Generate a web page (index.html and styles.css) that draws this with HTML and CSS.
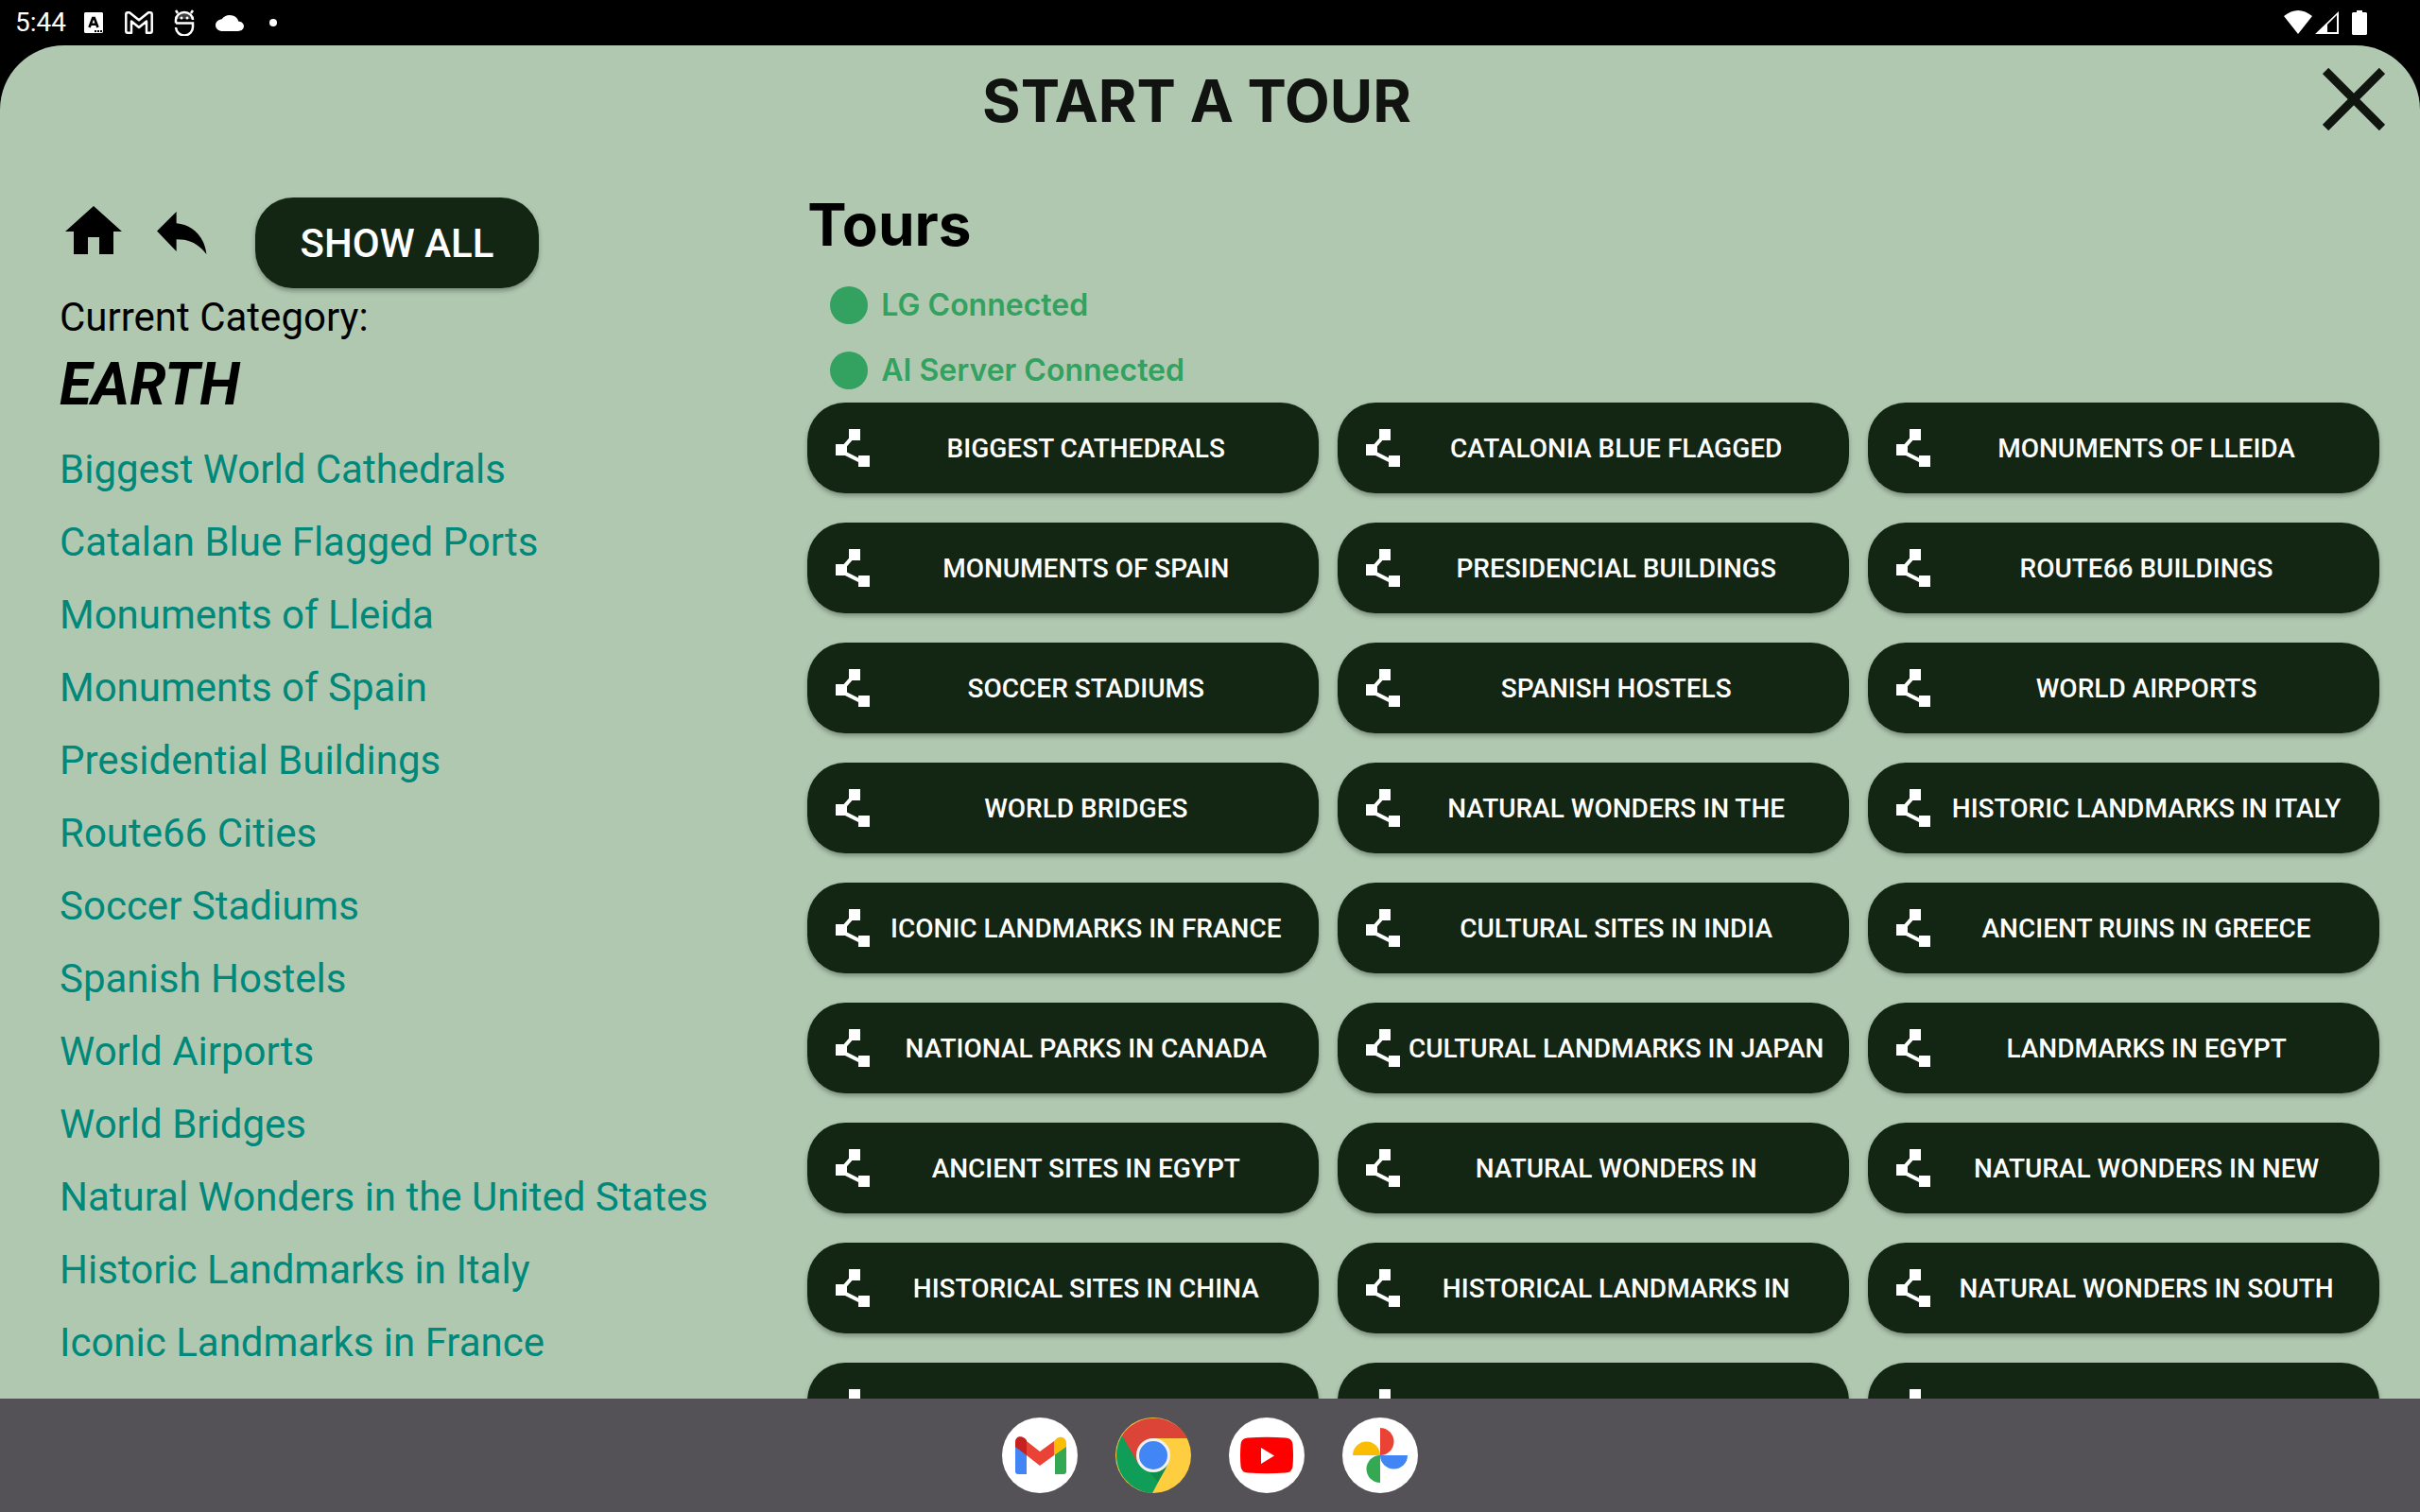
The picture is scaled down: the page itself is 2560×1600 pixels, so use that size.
FILE: index.html
```html
<!DOCTYPE html>
<html lang="en">
<head>
<meta charset="utf-8">
<title>Start a Tour</title>
<link rel="stylesheet" href="styles.css">
</head>
<body>
<svg class="defs" aria-hidden="true">
  <symbol id="tour" viewBox="0 0 24 24"><path d="M15 16v1.26l-6-3v-3.17L11.7 8H16V2h-6v4.9L7.3 10H3v6h5l7 3.5V22h6v-6z"/></symbol>
</svg>
<div class="statusbar">
  <div class="status-group">
    <span class="clock">5:44</span>
    <svg class="status-icon icon-a" viewBox="0 0 20 22"><path fill="#fff" d="M1 0h18l1 1v20l-1 1H1l-1-1V1z"/><path fill="none" stroke="#000" stroke-width="2.6" d="M5.500 16L9.200 6h1.600L14.500 16M7 12.800h6"/><path d="M11 19h2v2h-2zM14 19h2v2h-2zM17 19h2v2h-2z"/></svg>
    <svg class="status-icon icon-m" viewBox="0 0 30 24"><path fill="none" stroke="#fff" stroke-width="2.500" stroke-linejoin="round" d="M1.300 3Q1.300 1.300 3 1.300h2l10 8 10-8h2q1.700 0 1.700 1.700v18q0 1.700-1.700 1.700h-4V10.500L15 17 7 10.500V22.700H3q-1.700 0-1.700-1.700z"/></svg>
    <svg class="status-icon icon-s" viewBox="0 0 22 28"><path fill="none" stroke="#fff" stroke-width="2.500" d="M2 14.500V11a9 8 0 0 1 18 0M2 14.500h18V18a9 9 0 0 1-18 1M4 4L2 1M18 4l2-3"/><path fill="#fff" d="M3 13V10a8 7 0 0 1 16 0H3z" opacity=".25"/><circle cx="8" cy="9" r="1.500" fill="#fff"/><circle cx="14" cy="9" r="1.500" fill="#fff"/></svg>
    <svg class="status-icon icon-cloud" viewBox="0 4 24 16" preserveAspectRatio="none"><path fill="#fff" d="M19.350 10.040C18.670 6.590 15.640 4 12 4 9.110 4 6.600 5.640 5.350 8.040 2.340 8.360 0 10.910 0 14c0 3.310 2.690 6 6 6h13c2.760 0 5-2.240 5-5 0-2.640-2.050-4.780-4.650-4.960z"/></svg>
    <span class="status-dot"></span>
  </div>
  <svg class="status-right" viewBox="0 0 88 26"><path fill="#fff" d="M0 6Q15-6 30 6L15 25zM33 25L58 1v24z"/><path d="M46 15l10-10v18H46z"/><path fill="#fff" d="M77 0h6v2h4l1 1v22l-1 1H73l-1-1V3l1-1h4z"/></svg>
</div>
<div class="stage">
  <main class="screen">
    <header class="topbar">
      <h1 class="title">START A TOUR</h1>
      <button class="icon-button close" aria-label="Close"><svg viewBox="0 0 66 66"><path fill="none" stroke="#10150f" stroke-width="9" d="M3 3l60 60M63 3L3 63"/></svg></button>
    </header>
    <div class="columns">
      <section class="categories">
        <div class="tools">
          <button class="icon-button home" aria-label="Home"><svg viewBox="0 0 24 24"><path d="M10 20v-6h4v6h5v-8h3L12 3 2 12h3v8z"/></svg></button>
          <button class="icon-button back" aria-label="Back"><svg viewBox="0 0 54 46"><path d="M0 21L21 0v12.500C37 14 51 25 53.500 46 44 34 35 30 21 30v13z"/></svg></button>
          <button class="pill show-all">SHOW ALL</button>
        </div>
        <p class="current">Current Category:</p>
        <h2 class="category">EARTH</h2>
        <nav class="links">
          <a href="#">Biggest World Cathedrals</a>
          <a href="#">Catalan Blue Flagged Ports</a>
          <a href="#">Monuments of Lleida</a>
          <a href="#">Monuments of Spain</a>
          <a href="#">Presidential Buildings</a>
          <a href="#">Route66 Cities</a>
          <a href="#">Soccer Stadiums</a>
          <a href="#">Spanish Hostels</a>
          <a href="#">World Airports</a>
          <a href="#">World Bridges</a>
          <a href="#">Natural Wonders in the United States</a>
          <a href="#">Historic Landmarks in Italy</a>
          <a href="#">Iconic Landmarks in France</a>
        </nav>
      </section>
      <section class="tours">
        <h2 class="tours-title">Tours</h2>
        <ul class="connections">
          <li>LG Connected</li>
          <li>AI Server Connected</li>
        </ul>
        <div class="tour-grid">
          <button class="pill tour"><svg><use href="#tour"/></svg><span>BIGGEST CATHEDRALS</span></button>
          <button class="pill tour"><svg><use href="#tour"/></svg><span>CATALONIA BLUE FLAGGED</span></button>
          <button class="pill tour"><svg><use href="#tour"/></svg><span>MONUMENTS OF LLEIDA</span></button>
          <button class="pill tour"><svg><use href="#tour"/></svg><span>MONUMENTS OF SPAIN</span></button>
          <button class="pill tour"><svg><use href="#tour"/></svg><span>PRESIDENCIAL BUILDINGS</span></button>
          <button class="pill tour"><svg><use href="#tour"/></svg><span>ROUTE66 BUILDINGS</span></button>
          <button class="pill tour"><svg><use href="#tour"/></svg><span>SOCCER STADIUMS</span></button>
          <button class="pill tour"><svg><use href="#tour"/></svg><span>SPANISH HOSTELS</span></button>
          <button class="pill tour"><svg><use href="#tour"/></svg><span>WORLD AIRPORTS</span></button>
          <button class="pill tour"><svg><use href="#tour"/></svg><span>WORLD BRIDGES</span></button>
          <button class="pill tour"><svg><use href="#tour"/></svg><span>NATURAL WONDERS IN THE</span></button>
          <button class="pill tour"><svg><use href="#tour"/></svg><span>HISTORIC LANDMARKS IN ITALY</span></button>
          <button class="pill tour"><svg><use href="#tour"/></svg><span>ICONIC LANDMARKS IN FRANCE</span></button>
          <button class="pill tour"><svg><use href="#tour"/></svg><span>CULTURAL SITES IN INDIA</span></button>
          <button class="pill tour"><svg><use href="#tour"/></svg><span>ANCIENT RUINS IN GREECE</span></button>
          <button class="pill tour"><svg><use href="#tour"/></svg><span>NATIONAL PARKS IN CANADA</span></button>
          <button class="pill tour"><svg><use href="#tour"/></svg><span>CULTURAL LANDMARKS IN JAPAN</span></button>
          <button class="pill tour"><svg><use href="#tour"/></svg><span>LANDMARKS IN EGYPT</span></button>
          <button class="pill tour"><svg><use href="#tour"/></svg><span>ANCIENT SITES IN EGYPT</span></button>
          <button class="pill tour"><svg><use href="#tour"/></svg><span>NATURAL WONDERS IN</span></button>
          <button class="pill tour"><svg><use href="#tour"/></svg><span>NATURAL WONDERS IN NEW</span></button>
          <button class="pill tour"><svg><use href="#tour"/></svg><span>HISTORICAL SITES IN CHINA</span></button>
          <button class="pill tour"><svg><use href="#tour"/></svg><span>HISTORICAL LANDMARKS IN</span></button>
          <button class="pill tour"><svg><use href="#tour"/></svg><span>NATURAL WONDERS IN SOUTH</span></button>
          <button class="pill tour" aria-label="Tour"><svg><use href="#tour"/></svg></button>
          <button class="pill tour" aria-label="Tour"><svg><use href="#tour"/></svg></button>
          <button class="pill tour" aria-label="Tour"><svg><use href="#tour"/></svg></button>
        </div>
      </section>
    </div>
  </main>
</div>
<footer class="dock">
  <button class="app" aria-label="Gmail"><svg viewBox="0 0 80 80"><circle cx="40" cy="40" r="40" fill="#fff"/><path fill="#4285f4" d="M14 30l12 9v21h-9q-3 0-3-3z"/><path fill="#34a853" d="M56 39l12-9v27q0 3-3 3h-9z"/><path fill="#ea4335" d="M26 25l14 11 15-11v15L40 51 26 40z"/><path fill="#c5221f" d="M14 31v-5c0-6 6-7 10-4l2 2v16z"/><path fill="#fbbc04" d="M55 40V25l3-3c5-3 10 0 10 5v4z"/></svg></button>
  <button class="app" aria-label="Chrome"><svg viewBox="0 0 80 80"><circle cx="40" cy="40" r="40" fill="#ffcd40"/><path fill="#0f9d58" d="M7 19A40 40 0 0 0 39 80L55 50 40 40z"/><path fill="#db4437" d="M7 19A40 40 0 0 1 76 22H40L24 49z"/><path fill="#0b8043" opacity=".6" d="M36 58l18-5-9 15z"/><circle cx="40" cy="40" r="18" fill="#f1f1f1"/><circle cx="40" cy="40" r="15" fill="#4285f4"/></svg></button>
  <button class="app" aria-label="YouTube"><svg viewBox="0 0 80 80"><circle cx="40" cy="40" r="40" fill="#fff"/><path fill="red" d="M20 21.500q20-1.500 40 0 7 .5 7.500 7 1 11.500 0 23-.5 6.500-7.500 7-20 1.500-40 0-7-.5-7.500-7-1-11.500 0-23 .5-6.500 7.500-7z"/><path fill="#fff" d="M34 32v17l14-8.500z"/></svg></button>
  <button class="app" aria-label="Photos"><svg viewBox="0 0 80 80"><circle cx="40" cy="40" r="40" fill="#fff"/><path fill="#ea4335" d="M40 11a14.500 14.500 0 0 1 0 29z"/><path fill="#4285f4" d="M69 40a14.500 14.500 0 0 1-29 0z"/><path fill="#34a853" d="M40 69a14.500 14.500 0 0 1 0-29z"/><path fill="#fbbc04" d="M11 40a14.500 14.500 0 0 1 29 0z"/></svg></button>
</footer>
</body>
</html>
```
FILE: styles.css
```css
* { box-sizing: border-box; }

body {
  margin: 0;
  height: 100vh;
  display: grid;
  grid-template-rows: 48px minmax(0, 1fr) 120px;
  background: #000;
  color: #000;
  font-family: Roboto, sans-serif;
  overflow: hidden;
}

h1, h2, p, ul { margin: 0; padding: 0; }
button { font: inherit; border: 0; padding: 0; background: none; cursor: pointer; }
svg { display: block; }
.defs { display: none; }

/* Status bar */
.statusbar {
  display: flex;
  align-items: center;
  justify-content: space-between;
  padding: 0 56px 0 16px;
  color: #fff;
}
.status-group { display: flex; align-items: center; }
.clock { font-size: 28px; line-height: 32px; margin-right: 19px; }
.icon-a { width: 20px; height: 22px; margin-right: 23px; }
.icon-m { width: 30px; height: 24px; margin-right: 22px; }
.icon-s { width: 22px; height: 28px; margin-right: 22px; }
.icon-cloud { width: 30px; height: 17px; margin-right: 27px; }
.status-dot { width: 8px; height: 8px; border-radius: 50%; background: #fff; }
.status-right { width: 88px; height: 26px; }

/* Tour screen */
.stage { background: #000; overflow: hidden; }
.screen {
  height: 100%;
  background: #b0c8b0;
  border-radius: 68px 68px 0 0;
  overflow: hidden;
}
.topbar {
  height: 161px;
  display: grid;
  grid-template-columns: 66px 1fr 66px;
  align-items: start;
  padding: 24px 37px 0 9px;
}
.title {
  grid-column: 2;
  color: #10130f;
  font: 700 62px/70px Inter, sans-serif;
  text-align: center;
}
.close svg { width: 66px; height: 66px; }

.columns {
  display: grid;
  grid-template-columns: 1fr 2fr;
}
.categories { padding-left: 63px; }
.tools { display: flex; align-items: flex-start; height: 96px; }
.home svg { width: 72px; height: 72px; }
.back { margin: 15px 51px 0 31px; }
.back svg { width: 53px; height: 45px; }

.pill {
  height: 96px;
  border-radius: 40px;
  background: #132614;
  color: #fff;
  font-weight: 500;
  box-shadow: 0 3px 5px rgba(0, 0, 0, 0.3);
}
.show-all { width: 300px; font-size: 42px; }

.current { font-size: 42px; line-height: 48px; margin-top: 7px; }
.category { font-size: 62px; line-height: 72px; font-style: italic; margin-top: 11px; }
.links { display: flex; flex-direction: column; margin-top: 15px; }
.links a {
  color: #00897b;
  font-size: 42px;
  line-height: 77px;
  text-decoration: none;
  white-space: nowrap;
}

.tours { padding: 0 43px 0 1px; }
.tours-title { font: 700 62px/58px Inter, sans-serif; }
.connections { list-style: none; padding: 21px 0 0 24px; }
.connections li {
  display: flex;
  align-items: center;
  gap: 14px;
  height: 69px;
  color: #33a160;
  font: 600 32px/40px Inter, sans-serif;
}
.connections li::before {
  content: "";
  width: 40px;
  height: 40px;
  border-radius: 50%;
  background: #33a160;
}
.tour-grid {
  display: grid;
  grid-template-columns: repeat(3, minmax(0, 1fr));
  gap: 31px 20px;
}
.tour {
  display: flex;
  align-items: center;
  padding: 0 24px;
  font-size: 28px;
}
.tour svg { flex: none; width: 48px; height: 48px; fill: #fff; }
.tour span { flex: 1; white-space: nowrap; text-align: center; }

/* App dock */
.dock {
  display: flex;
  align-items: center;
  justify-content: center;
  gap: 40px;
  background: #545256;
}
.app svg { width: 80px; height: 80px; }
```
